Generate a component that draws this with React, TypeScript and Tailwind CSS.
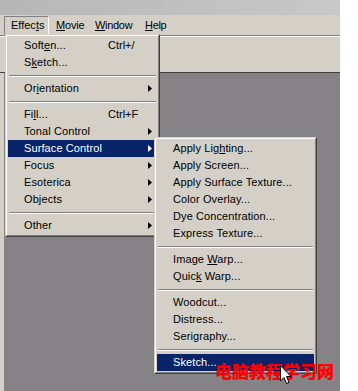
import React from "react";

type Item =
  | { sep: true }
  | { label: React.ReactNode; shortcut?: string; arrow?: boolean; active?: boolean };

const U = ({ c }: { c: string }) => <span className="underline underline-offset-[1px]">{c}</span>;

const menu1: Item[] = [
  { label: <>Soft<U c="e" />n...</>, shortcut: "Ctrl+/" },
  { label: <>S<U c="k" />etch...</> },
  { sep: true },
  { label: <>Or<U c="i" />entation</>, arrow: true },
  { sep: true },
  { label: <>Fi<U c="l" />l...</>, shortcut: "Ctrl+F" },
  { label: "Tonal Control", arrow: true },
  { label: "Surface Control", arrow: true, active: true },
  { label: "Focus", arrow: true },
  { label: "Esoterica", arrow: true },
  { label: "Objects", arrow: true },
  { sep: true },
  { label: "Other", arrow: true },
];

const menu2: Item[] = [
  { label: <>Apply Lig<U c="h" />ting...</> },
  { label: "Apply Screen..." },
  { label: "Apply Surface Texture..." },
  { label: "Color Overlay..." },
  { label: "Dye Concentration..." },
  { label: "Express Texture..." },
  { sep: true },
  { label: <>Image <U c="W" />arp...</> },
  { label: <>Quic<U c="k" /> Warp...</> },
  { sep: true },
  { label: "Woodcut..." },
  { label: "Distress..." },
  { label: "Serigraphy..." },
  { sep: true },
  { label: "Sketch...", active: true },
];

function Arrow({ white }: { white?: boolean }) {
  return (
    <svg width="4" height="7" viewBox="0 0 4 7" className="block">
      <path d="M0 0 L4 3.5 L0 7 Z" fill={white ? "#ffffff" : "#000000"} />
    </svg>
  );
}

function Menu({ items, className }: { items: Item[]; className: string }) {
  return (
    <div
      className={
        "absolute bg-[#d4d0c8] border-t border-l border-t-[#d4d0c8] border-l-[#d4d0c8] border-r border-b border-r-[#404040] border-b-[#404040] " +
        className
      }
    >
      <div className="border-t border-l border-t-white border-l-white border-r border-b border-r-[#808080] border-b-[#808080] pt-[1px] px-[1px] pb-[1px] flex flex-col">
        {items.map((it, i) =>
          "sep" in it ? (
            <div key={i} className="h-[9px] flex flex-col justify-center px-[1px]">
              <div className="h-[1px] bg-[#808080]" />
              <div className="h-[1px] bg-white" />
            </div>
          ) : (
            <div
              key={i}
              className={
                "h-[17px] flex items-center pl-[16px] pr-[6px] relative " +
                (it.active ? "bg-[#0a246a] text-white" : "text-black")
              }
            >
              <span className="whitespace-nowrap tracking-[0.1px]">{it.label}</span>
              {it.shortcut && (
                <span className="absolute left-[100px] whitespace-nowrap">{it.shortcut}</span>
              )}
              {it.arrow && (
                <span className="absolute right-[5px] top-[5px]">
                  <Arrow white={it.active} />
                </span>
              )}
            </div>
          )
        )}
      </div>
    </div>
  );
}

export default function App() {
  return (
    <div
      className="w-[358px] h-[391px] bg-white relative overflow-hidden text-[11px] leading-none"
      style={{ fontFamily: '"Liberation Sans", Arial, sans-serif' }}
    >
      <div className="w-[340px] h-full flex flex-col">
        <div className="h-[15px] bg-gradient-to-r from-[#b6b6b6] to-[#c8c8c8]" />
        <div className="h-[20px] bg-[#d4d0c8] flex items-center pl-[4px]">
          <div className="h-[19px] w-[45px] pl-[6px] flex items-center border border-t-[#808080] border-l-[#808080] border-r-white border-b-white">
            Effec<U c="t" />s
          </div>
          <div className="w-[40px] pl-[7px] tracking-[-0.2px]"><U c="M" />ovie</div>
          <div className="w-[50px] pl-[6px] tracking-[-0.3px]"><U c="W" />indow</div>
          <div className="pl-[6px] tracking-[-0.3px]"><U c="H" />elp</div>
        </div>
        <div className="h-[1px] bg-[#808080]" />
        <div className="h-[1px] bg-white" />
        <div className="h-[36px] bg-[#d4d0c8] border-b border-b-[#404040]" />
        <div className="flex-1 flex">
          <div className="w-[4px] bg-[#d4d0c8]" />
          <div className="flex-1 bg-[#858385]" />
        </div>
      </div>

      <Menu items={menu1} className="left-[5px] top-[34px] w-[155px]" />
      <Menu items={menu2} className="left-[154px] top-[137px] w-[163px]" />

      <div
        className="absolute left-[215px] top-[362px] text-[#ff0000] font-black text-[17px] leading-none whitespace-nowrap"
        style={{ fontFamily: '"Noto Sans CJK SC", sans-serif' }}
      >
        电脑教程学习网
      </div>
      <svg className="absolute left-[280px] top-[365px]" width="12" height="20" viewBox="0 0 12 20">
        <path
          d="M0.5 0.5 L0.5 16 L4 12.5 L6.5 18.5 L9 17.5 L6.5 11.5 L11 11.5 Z"
          fill="#ffffff"
          stroke="#000000"
          strokeWidth="1"
        />
      </svg>
    </div>
  );
}
